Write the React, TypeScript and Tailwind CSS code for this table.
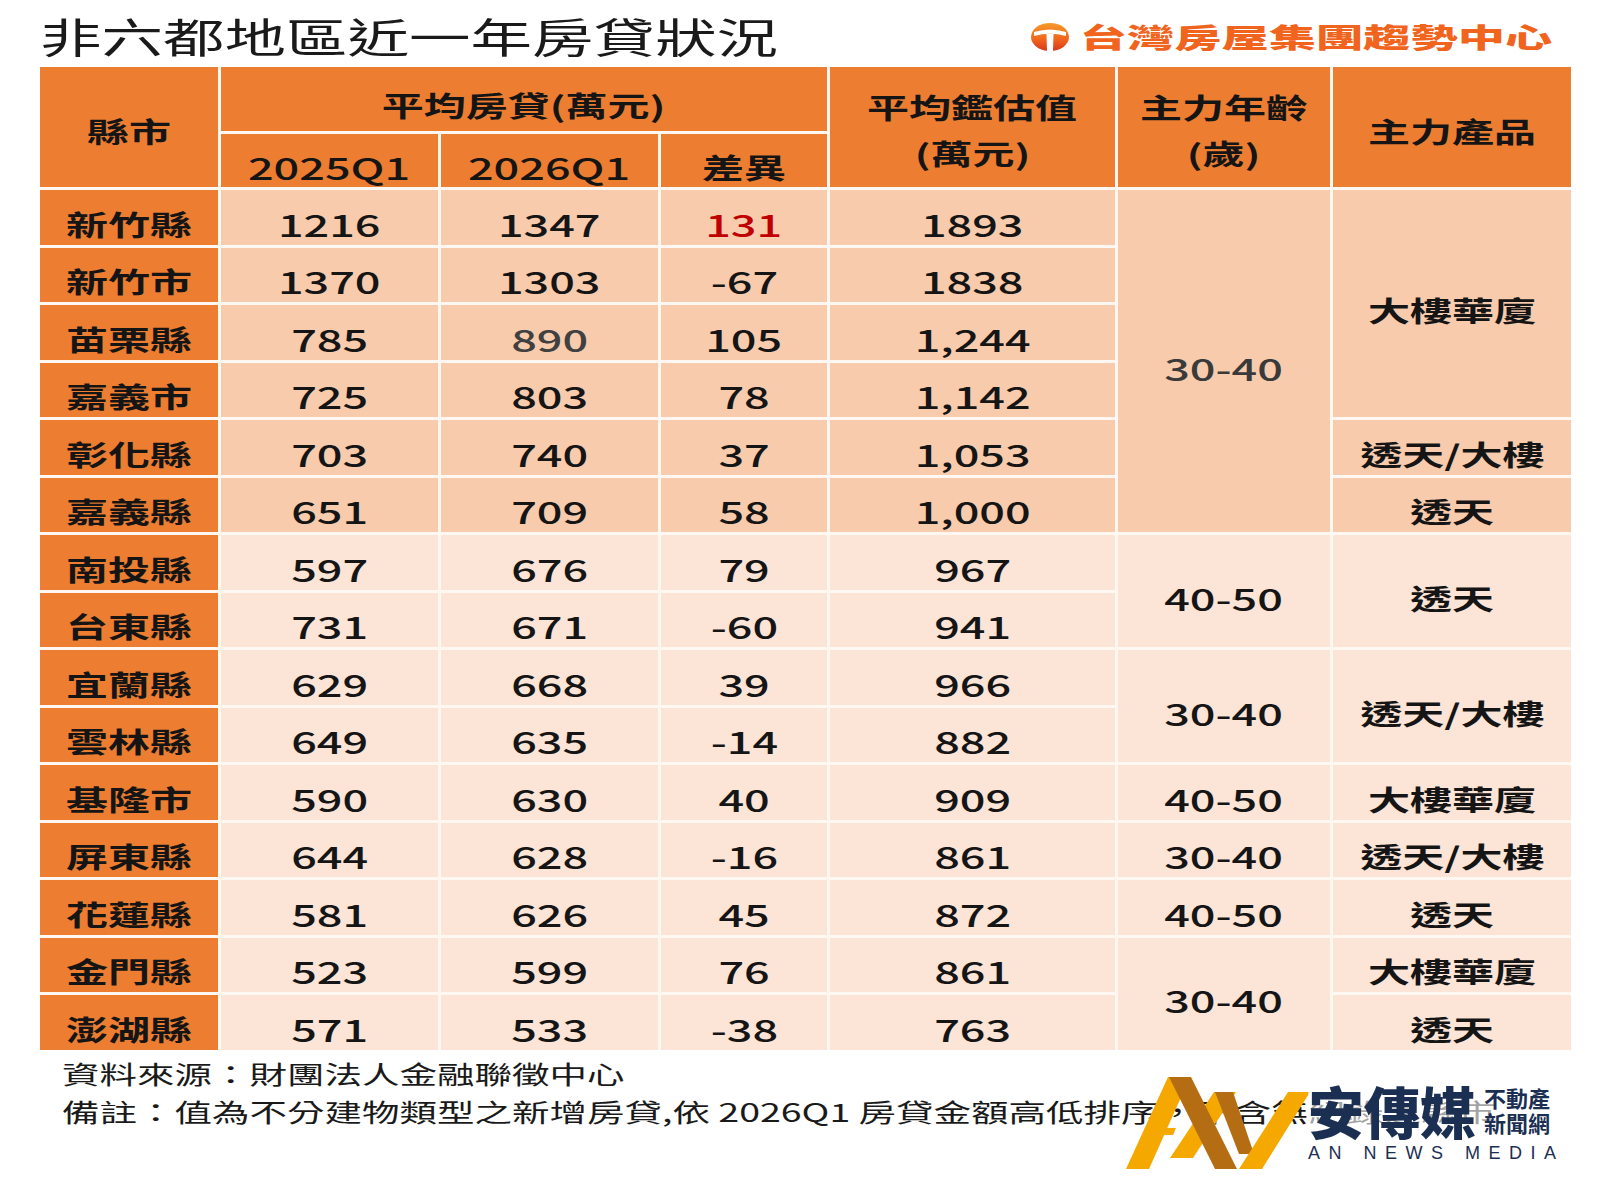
import React from "react";

type Row = [string, string, string, string, string];

const rows: Row[] = [
  ["新竹縣", "1216", "1347", "131", "1893"],
  ["新竹市", "1370", "1303", "-67", "1838"],
  ["苗栗縣", "785", "890", "105", "1,244"],
  ["嘉義市", "725", "803", "78", "1,142"],
  ["彰化縣", "703", "740", "37", "1,053"],
  ["嘉義縣", "651", "709", "58", "1,000"],
  ["南投縣", "597", "676", "79", "967"],
  ["台東縣", "731", "671", "-60", "941"],
  ["宜蘭縣", "629", "668", "39", "966"],
  ["雲林縣", "649", "635", "-14", "882"],
  ["基隆市", "590", "630", "40", "909"],
  ["屏東縣", "644", "628", "-16", "861"],
  ["花蓮縣", "581", "626", "45", "872"],
  ["金門縣", "523", "599", "76", "861"],
  ["澎湖縣", "571", "533", "-38", "763"],
];

type Group = { start: number; span: number; text: string };

const ages: Group[] = [
  { start: 0, span: 6, text: "30-40" },
  { start: 6, span: 2, text: "40-50" },
  { start: 8, span: 2, text: "30-40" },
  { start: 10, span: 1, text: "40-50" },
  { start: 11, span: 1, text: "30-40" },
  { start: 12, span: 1, text: "40-50" },
  { start: 13, span: 2, text: "30-40" },
];

const products: Group[] = [
  { start: 0, span: 4, text: "大樓華廈" },
  { start: 4, span: 1, text: "透天/大樓" },
  { start: 5, span: 1, text: "透天" },
  { start: 6, span: 2, text: "透天" },
  { start: 8, span: 2, text: "透天/大樓" },
  { start: 10, span: 1, text: "大樓華廈" },
  { start: 11, span: 1, text: "透天/大樓" },
  { start: 12, span: 1, text: "透天" },
  { start: 13, span: 1, text: "大樓華廈" },
  { start: 14, span: 1, text: "透天" },
];

const spanCls: Record<number, string> = {
  1: "row-span-1",
  2: "row-span-2",
  4: "row-span-4",
  6: "row-span-6",
};

const ORANGE = "bg-[#ed7d31]";
const PEACH = "bg-[#f8cbad]";
const LIGHT = "bg-[#fce4d6]";

function Cell({
  children,
  className = "",
}: {
  children: React.ReactNode;
  className?: string;
}) {
  return (
    <div className={`flex items-center justify-center ${className}`}>
      <span className="inline-block scale-x-150 whitespace-nowrap leading-none">{children}</span>
    </div>
  );
}

function TwoLine({ a, b, className = "" }: { a: string; b: string; className?: string }) {
  return (
    <div className={`flex flex-col items-center justify-center ${className}`}>
      <span className="inline-block scale-x-150 whitespace-nowrap leading-[46px]">{a}</span>
      <span className="inline-block scale-x-150 whitespace-nowrap leading-[46px]">{b}</span>
    </div>
  );
}

function TaiwanRealtyIcon() {
  return (
    <svg width="40" height="30" viewBox="0 0 40 30">
      <defs>
        <linearGradient id="trg" x1="0" y1="0" x2="0" y2="1">
          <stop offset="0" stopColor="#f79a2a" />
          <stop offset="0.6" stopColor="#f0641e" />
          <stop offset="1" stopColor="#d8361a" />
        </linearGradient>
      </defs>
      <ellipse cx="20" cy="15" rx="19" ry="14" fill="url(#trg)" />
      <path d="M4 10 Q20 5 36 10 L36 14 Q20 9.5 4 14 Z" fill="#ffffff" />
      <path d="M16.5 12 L23.5 12 L23 29 L17 29 Z" fill="#ffffff" />
    </svg>
  );
}

function AnMark() {
  return (
    <svg width="210" height="110" viewBox="0 0 210 110" className="absolute left-[1106px] top-[1070px]">
      <polygon points="20,99 43,99 84,7 62,7" fill="#f4a800" />
      <polygon points="47,58 70,58 67,65 44,65" fill="#f4a800" />
      <polygon points="64,88 87,88 130,22 108,22" fill="#f4a800" />
      <polygon points="63,7 85,7 131,99 109,99" fill="#b56d14" />
      <polygon points="109,22 127,22 148,84 133,84" fill="#b56d14" />
      <polygon points="133,99 156,99 204,22 182,22" fill="#f4a800" />
    </svg>
  );
}

export default function App() {
  return (
    <div className="relative h-[1200px] w-[1600px] overflow-hidden bg-white font-['Noto_Sans_CJK_TC',sans-serif] text-[#151515]">
      {/* Top bar */}
      <div className="flex h-[67px] items-center justify-between pl-[40px] pr-[46px] pt-[6px]">
        <div className="w-[740px]">
          <span className="inline-block origin-left scale-x-150 whitespace-nowrap text-[41px] leading-none text-[#1a1a1a]">
            非六都地區近一年房貸狀況
          </span>
        </div>
        <div className="flex items-center">
          <div className="mr-[8px]">
            <TaiwanRealtyIcon />
          </div>
          <div className="flex w-[476px] justify-center">
            <span className="inline-block scale-x-[1.75] whitespace-nowrap text-[27px] font-black leading-none text-[#f0641e]">
              台灣房屋集團趨勢中心
            </span>
          </div>
        </div>
      </div>

      {/* Table */}
      <div className="ml-[40px] grid w-[1531px] grid-cols-[178px_217px_217px_166px_285px_212px_238px] grid-rows-[64px_53px_repeat(15,54.5px)] gap-[3px] bg-[#fff8f2]">
        <Cell className={`${ORANGE} row-span-2 pt-[8px] text-[28px] font-bold`}>縣市</Cell>
        <Cell className={`${ORANGE} col-span-3 pt-[12px] text-[28px] font-bold`}>平均房貸(萬元)</Cell>
        <TwoLine className={`${ORANGE} row-span-2 pt-[6px] text-[28px] font-bold`} a="平均鑑估值" b="(萬元)" />
        <TwoLine className={`${ORANGE} row-span-2 pt-[6px] text-[28px] font-bold`} a="主力年齡" b="(歲)" />
        <Cell className={`${ORANGE} row-span-2 pt-[8px] text-[28px] font-bold`}>主力產品</Cell>
        <Cell className={`${ORANGE} pt-[12px] text-[30px] font-medium`}>2025Q1</Cell>
        <Cell className={`${ORANGE} pt-[12px] text-[30px] font-medium`}>2026Q1</Cell>
        <Cell className={`${ORANGE} pt-[12px] text-[28px] font-bold`}>差異</Cell>

        {rows.map((r, i) => {
          const bg = i < 6 ? PEACH : LIGHT;
          const age = ages.find((a) => a.start === i);
          const prod = products.find((p) => p.start === i);
          return (
            <React.Fragment key={r[0]}>
              <Cell className={`${ORANGE} pt-[13px] text-[28px] font-bold`}>{r[0]}</Cell>
              {r.slice(1).map((v, j) => (
                <Cell
                  key={j}
                  className={`${bg} pt-[13px] text-[30px] font-medium ${
                    i === 0 && j === 2 ? "text-[#c00000]" : i === 2 && j === 1 ? "text-[#404040]" : ""
                  }`}
                >
                  {v}
                </Cell>
              ))}
              {age && (
                <Cell
                  className={`${age.start < 6 ? PEACH : LIGHT} ${spanCls[age.span]} pt-[13px] text-[30px] font-medium ${
                    age.start === 0 ? "text-[#3a3a3a]" : ""
                  }`}
                >
                  {age.text}
                </Cell>
              )}
              {prod && (
                <Cell className={`${prod.start < 6 ? PEACH : LIGHT} ${spanCls[prod.span]} pt-[13px] text-[28px] font-bold`}>
                  {prod.text}
                </Cell>
              )}
            </React.Fragment>
          );
        })}
      </div>

      {/* Footer notes */}
      <div className="pl-[62px] pt-[4px] text-[25px] leading-[38px] text-[#1a1a1a]">
        <div>
          <span className="inline-block origin-left scale-x-150 whitespace-nowrap">資料來源：財團法人金融聯徵中心</span>
        </div>
        <div>
          <span className="inline-block origin-left scale-x-150 whitespace-nowrap">
            備註：值為不分建物類型之新增房貸,依 2026Q1 房貸金額高低排序，不含無紀錄之縣市
          </span>
        </div>
      </div>

      {/* AN News Media watermark */}
      <AnMark />
      <div className="absolute left-[1308px] top-[1082px] flex flex-col bg-white/60">
        <div className="flex items-center">
          <span className="text-[56px] font-black leading-none text-[#1b2f52]">安傳媒</span>
          <div className="ml-[8px] flex flex-col text-[22px] font-bold leading-[25px] text-[#1b2f52]">
            <span>不動產</span>
            <span>新聞網</span>
          </div>
        </div>
        <div className="mt-[6px] font-['Liberation_Sans',sans-serif] text-[18px] leading-none tracking-[8.5px] text-[#1b2f52]">
          AN NEWS MEDIA
        </div>
      </div>
    </div>
  );
}
